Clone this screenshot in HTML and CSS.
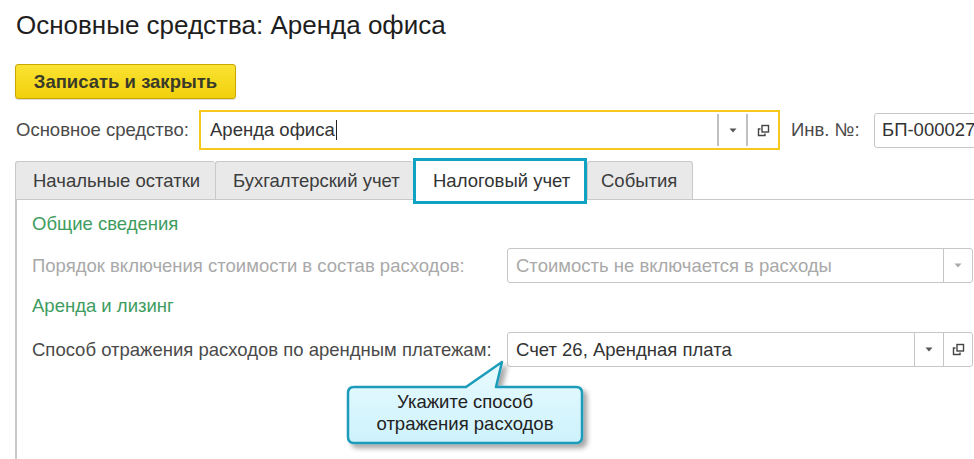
FILE: index.html
```html
<!DOCTYPE html>
<html lang="ru">
<head>
<meta charset="utf-8">
<title>Основные средства: Аренда офиса</title>
<link rel="stylesheet" href="styles.css">
</head>
<body>
<div class="page">
  <h1 class="title">Основные средства: Аренда офиса</h1>
  <div class="toolbar">
    <button class="btn-primary">Записать и закрыть</button>
  </div>
  <div class="field-row">
    <span class="label label-main">Основное средство:</span>
    <div class="input input-focus">
      <span class="input-text">Аренда офиса<span class="caret"></span></span>
      <span class="ibtn ibtn-drop"><svg width="8" height="5" viewBox="0 0 8 5"><path d="M0.5 0.5h7L4 4.5z" fill="#555"/></svg></span>
      <span class="ibtn ibtn-open"><svg width="13" height="13" viewBox="0 0 13 13"><rect x="5" y="1.5" width="6.5" height="6.5" fill="none" stroke="#444" stroke-width="1.4"/><path d="M3.5 5H1.5v6.5H8V9.5" fill="none" stroke="#444" stroke-width="1.4"/></svg></span>
    </div>
    <span class="label label-inv">Инв. №:</span>
    <div class="input input-inv"><span class="input-text">БП-000027</span></div>
  </div>
  <div class="tabs">
    <div class="tab">Начальные остатки</div>
    <div class="tab">Бухгалтерский учет</div>
    <div class="tab tab-active">Налоговый учет</div>
    <div class="tab">События</div>
  </div>
  <div class="panel">
    <div class="group-title">Общие сведения</div>
    <div class="form-row">
      <span class="label label-disabled">Порядок включения стоимости в состав расходов:</span>
      <div class="input input-wide input-disabled">
        <span class="input-text">Стоимость не включается в расходы</span>
        <span class="ibtn ibtn-drop"><svg width="8" height="5" viewBox="0 0 8 5"><path d="M0.5 0.5h7L4 4.5z" fill="#aaa"/></svg></span>
      </div>
    </div>
    <div class="group-title group-title-2">Аренда и лизинг</div>
    <div class="form-row form-row-2">
      <span class="label">Способ отражения расходов по арендным платежам:</span>
      <div class="input input-wide">
        <span class="input-text">Счет 26, Арендная плата</span>
        <span class="ibtn ibtn-drop"><svg width="8" height="5" viewBox="0 0 8 5"><path d="M0.5 0.5h7L4 4.5z" fill="#555"/></svg></span>
        <span class="ibtn ibtn-open"><svg width="13" height="13" viewBox="0 0 13 13"><rect x="5" y="1.5" width="6.5" height="6.5" fill="none" stroke="#444" stroke-width="1.4"/><path d="M3.5 5H1.5v6.5H8V9.5" fill="none" stroke="#444" stroke-width="1.4"/></svg></span>
      </div>
    </div>
  </div>
  <div class="callout">
    <svg class="callout-shape" width="250" height="96" viewBox="0 0 250 96">
      <defs>
        <linearGradient id="cg" x1="0" y1="0" x2="0" y2="1">
          <stop offset="0" stop-color="#e9fbff"/>
          <stop offset="1" stop-color="#cdf2fc"/>
        </linearGradient>
        <filter id="sh" x="-10%" y="-10%" width="130%" height="140%">
          <feDropShadow dx="4" dy="4" stdDeviation="2.5" flood-color="#000" flood-opacity="0.35"/>
        </filter>
      </defs>
      <path d="M9 28H121L157 3L151 28H231Q237 28 237 34V78Q237 84 231 84H9Q3 84 3 78V34Q3 28 9 28Z" fill="url(#cg)" stroke="#1a9cba" stroke-width="2.5" stroke-linejoin="round" filter="url(#sh)"/>
    </svg>
    <div class="callout-text">Укажите способ<br>отражения расходов</div>
  </div>
</div>
</body>
</html>
```
FILE: styles.css
```css
html, body {
  margin: 0;
  padding: 0;
  background: #fff;
}
body {
  width: 974px;
  height: 459px;
  overflow: hidden;
  font-family: "Liberation Sans", Arial, sans-serif;
  color: #333;
}
.page {
  position: relative;
  box-sizing: border-box;
  height: 459px;
  padding: 10px 0 0 15px;
}
.title {
  margin: 0;
  font-size: 26px;
  font-weight: normal;
  line-height: 30px;
  color: #1e1e1e;
  padding-left: 1px;
}
.toolbar {
  margin-top: 24px;
  display: flex;
}
.btn-primary {
  box-sizing: border-box;
  width: 221px;
  height: 35px;
  border: 1px solid #c9a700;
  border-radius: 3px;
  background: linear-gradient(#fae232, #f1d10c);
  font-family: "Liberation Sans", Arial, sans-serif;
  font-size: 18.5px;
  font-weight: bold;
  color: #3a3a2a;
  padding: 0;
  box-shadow: 0 1px 1px rgba(0,0,0,0.15);
}
.field-row {
  margin-top: 11px;
  display: flex;
  align-items: center;
  height: 40px;
}
.field-row > * {
  flex: none;
}
.label {
  font-size: 18.5px;
  color: #4a4a4a;
  white-space: nowrap;
}
.label-main {
  margin-left: 1px;
  width: 183px;
}
.input {
  box-sizing: border-box;
  display: flex;
  align-items: stretch;
  border: 1px solid #c6c6c6;
  border-radius: 3px;
  background: #fff;
  height: 35px;
}
.input-text {
  flex: 1;
  display: flex;
  align-items: center;
  padding-left: 8px;
  font-size: 18.5px;
  color: #333;
  white-space: nowrap;
  overflow: hidden;
}
.caret {
  display: inline-block;
  width: 1px;
  height: 20px;
  background: #222;
  margin-left: 1px;
}
.input-focus {
  width: 581px;
  height: 40px;
  border: 2px solid #f6c81c;
  border-radius: 0;
}
.input-focus .input-text {
  padding-left: 9px;
}
.ibtn {
  flex: none;
  display: flex;
  align-items: center;
  justify-content: center;
  border-left: 1px solid #c6c6c6;
  width: 28px;
}
.input-focus .ibtn {
  margin: 2px 0;
  border-left: 2px solid #c0c0c0;
  width: 27px;
}
.input-focus .ibtn-open {
  width: 30px;
}
.label-inv {
  margin-left: 11px;
  width: 83px;
}
.input-inv {
  width: 140px;
}
.input-inv .input-text {
  padding-left: 7px;
  color: #333;
}
.tabs {
  margin-top: 11px;
  display: flex;
  height: 38px;
  position: relative;
  z-index: 1;
}
.tab {
  flex: none;
  box-sizing: border-box;
  display: flex;
  align-items: center;
  padding: 0 0 0 17px;
  height: 38px;
  font-size: 18.5px;
  color: #3c3c3c;
  background: #e9e9e9;
  border: 1px solid #c9c9c9;
  border-bottom: none;
  border-right: none;
  border-radius: 3px 3px 0 0;
  white-space: nowrap;
}
.tab:nth-child(1) { width: 200px; }
.tab:nth-child(2) { width: 198px; }
.tab:nth-child(4) { width: 106px; border-right: 1px solid #c9c9c9; padding-left: 13px; }
.tab-active {
  width: 174px;
  background: #fff;
  margin-top: -3px;
  height: 46px;
  border: 3px solid #0fa2c2;
  border-radius: 0;
  padding: 0 0 1px 17px;
  color: #333;
}
.panel {
  box-sizing: border-box;
  height: 260px;
  border-left: 2px solid #c9c9c9;
  border-top: 1px solid #c9c9c9;
  margin-top: 0;
  padding-left: 15px;
}
.group-title {
  margin-top: 12px;
  font-size: 18.5px;
  line-height: 24px;
  color: #3e9c5e;
}
.group-title-2 {
  margin-top: 11px;
}
.form-row {
  margin-top: 12px;
  display: flex;
  align-items: center;
}
.form-row > * {
  flex: none;
}
.form-row-2 {
  margin-top: 14px;
}
.form-row .label {
  width: 475px;
}
.label-disabled {
  color: #a9a9a9;
}
.input-wide {
  width: 466px;
}
.input-disabled .input-text {
  color: #a9a9a9;
}
.callout {
  position: absolute;
  left: 345px;
  top: 359px;
  width: 250px;
  height: 96px;
}
.callout-shape {
  position: absolute;
  left: 0;
  top: 0;
}
.callout-text {
  position: absolute;
  left: 3px;
  top: 32px;
  width: 234px;
  text-align: center;
  font-size: 18.5px;
  line-height: 22px;
  color: #222;
}
```
